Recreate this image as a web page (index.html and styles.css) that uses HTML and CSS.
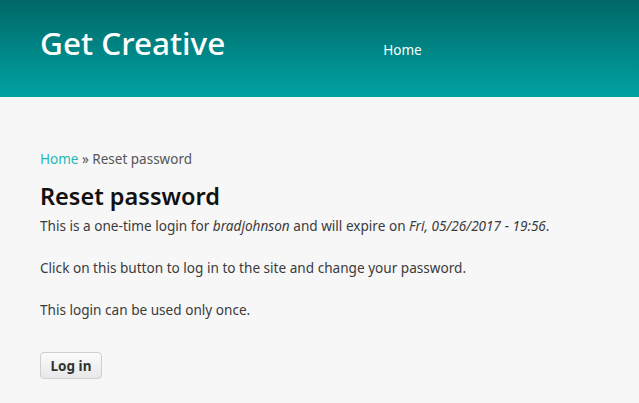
FILE: index.html
```html
<!DOCTYPE html>
<html lang="en">
<head>
    <meta charset="UTF-8">
    <title>Reset password | Get Creative</title>
    <link rel="stylesheet" href="styles.css">
</head>
<body>
    <header class="ust">
        <a class="logo" href="#">Get Creative</a>
        <nav class="menu">
            <a href="#">Home</a>
        </nav>
    </header>

    <main class="icerik">
        <div class="yol">
            <a href="#">Home</a> &raquo; Reset password
        </div>
        <h1 class="baslik">Reset password</h1>
        <form class="form">
            <p>This is a one-time login for <em>bradjohnson</em> and will expire on <em>Fri, 05/26/2017 - 19:56</em>.</p>
            <p>Click on this button to log in to the site and change your password.</p>
            <p>This login can be used only once.</p>
            <button class="buton" type="submit">Log in</button>
        </form>
    </main>
</body>
</html>
```

FILE: styles.css
```css
body {
    margin: 0;
    background-color: #f7f7f7;
    font-family: "Noto Sans", "Open Sans", sans-serif;
    color: #3b3b3b;
}
.ust {
    height: 97px;
    display: flex;
    align-items: flex-start;
    background: linear-gradient(to bottom, #006767 0%, #00a2a2 100%);
}
.logo {
    color: white;
    text-decoration: none;
    font-size: 31.5px;
    font-weight: 500;
    margin-left: 40px;
    margin-top: 21px;
}
.menu {
    margin-left: 158px;
    margin-top: 38px;
}
.menu a {
    color: white;
    text-decoration: none;
    font-size: 13.5px;
}
.icerik {
    padding: 52px 40px 0 40px;
}
.yol {
    font-size: 13.5px;
    line-height: 20px;
    color: #555;
}
.yol a {
    color: #1fb7b7;
    text-decoration: none;
}
.baslik {
    font-size: 23.5px;
    font-weight: 600;
    line-height: 32px;
    color: #111;
    margin: 11px 0 4px 0;
}
.form p {
    font-size: 13.6px;
    margin: 0 0 22px 0;
    line-height: 20px;
}
.buton {
    margin-top: 10px;
    font-family: inherit;
    font-size: 13.5px;
    font-weight: 700;
    color: #333;
    background: linear-gradient(to bottom, #fbfbfb, #e8e8e8);
    border: 1px solid #cfcfcf;
    border-radius: 4px;
    width: 62px;
    height: 27px;
}
```
